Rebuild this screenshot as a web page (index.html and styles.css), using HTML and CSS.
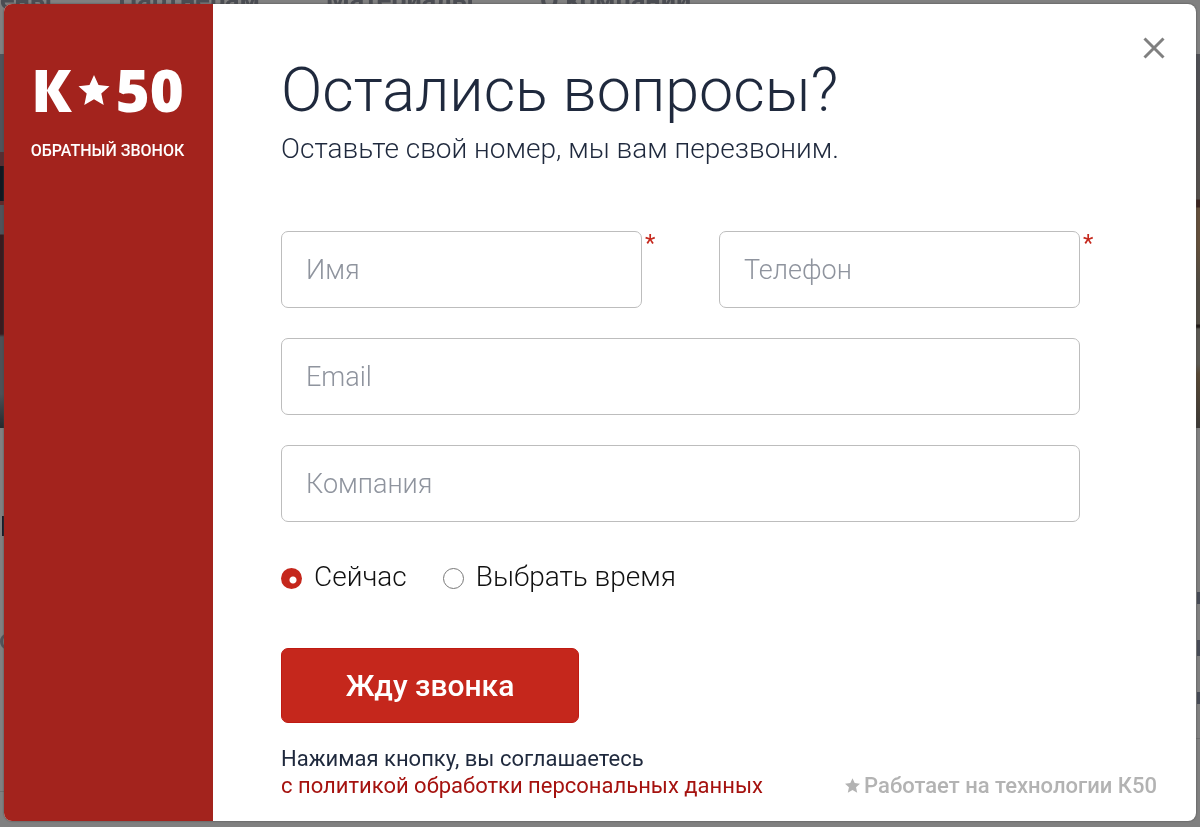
FILE: index.html
```html
<!DOCTYPE html>
<html lang="ru">
<head>
<meta charset="utf-8">
<meta name="viewport" content="width=device-width, initial-scale=1">
<title>Обратный звонок</title>
<link rel="stylesheet" href="styles.css">
</head>
<body>
<div class="page" aria-hidden="true">
  <div class="page-nav"><span>ены</span><span>Партнерам</span><span>Материалы</span><span>О компании</span></div>
  <div class="page-hero"></div>
  <div class="page-edge page-edge-left"><i class="block block-title"></i><i class="block block-letter"></i><i class="rule"></i></div>
  <div class="page-edge page-edge-right"><i class="mark"></i><i class="mark mark-tall"></i><i class="mark"></i><i class="rule"></i></div>
</div>
<main class="dialog" role="dialog" aria-labelledby="title">
  <aside class="side">
    <div class="logo">
      <span>К</span>
      <svg class="logo-star" viewBox="0 0 31 30" aria-hidden="true"><path d="M15.500 0 20 10 31 11.300 22.800 18.600 25.200 30 15.500 24.200 5.800 30 8.200 18.600 0 11.300 11 10Z"/></svg>
      <span>50</span>
    </div>
    <p class="side-label">ОБРАТНЫЙ ЗВОНОК</p>
  </aside>
  <section class="content">
    <button class="close" type="button" aria-label="Закрыть">
      <svg viewBox="0 0 22 22" aria-hidden="true"><path d="M1.500 1.500 20.500 20.500M20.500 1.500 1.500 20.500"/></svg>
    </button>
    <h1 class="title" id="title">Остались вопросы?</h1>
    <p class="lead">Оставьте свой номер, мы вам перезвоним.</p>
    <form class="form">
      <div class="row">
        <div class="field required"><input type="text" placeholder="Имя" aria-label="Имя" required></div>
        <div class="field required"><input type="tel" placeholder="Телефон" aria-label="Телефон" required></div>
      </div>
      <div class="field"><input type="email" placeholder="Email" aria-label="Email"></div>
      <div class="field"><input type="text" placeholder="Компания" aria-label="Компания"></div>
      <div class="options">
        <label class="option"><input type="radio" name="when" checked>Сейчас</label>
        <label class="option"><input type="radio" name="when">Выбрать время</label>
      </div>
      <button class="submit" type="submit">Жду звонка</button>
    </form>
    <footer class="footer">
      <p class="consent">Нажимая кнопку, вы соглашаетесь<br><a href="#">с политикой обработки персональных данных</a></p>
      <a class="powered" href="#"><svg viewBox="0 0 31 30" aria-hidden="true"><path d="M15.500 0 20 10 31 11.300 22.800 18.600 25.200 30 15.500 24.200 5.800 30 8.200 18.600 0 11.300 11 10Z"/></svg>Работает на технологии К50</a>
    </footer>
  </section>
</main>
</body>
</html>
```
FILE: styles.css
```css
* { box-sizing: border-box; }
body {
  margin: 0;
  padding: 4px 4px 6px;
  min-height: 100vh;
  display: flex;
  background: #808080;
  color: #1f293d;
  font-family: Roboto, "Noto Sans", sans-serif;
}
h1, p { margin: 0; }

.page { position: fixed; inset: 0; overflow: hidden; }
.page-nav {
  position: absolute;
  top: -16px;
  left: 0;
  display: flex;
  gap: 66px;
  color: #4b4d53;
  font-size: 27px;
  font-weight: 700;
  line-height: 32px;
  white-space: nowrap;
}
.page-hero {
  position: absolute;
  top: 54px;
  left: 0;
  right: 0;
  height: 374px;
  background:
    linear-gradient(#50535a 0 98px, #582e32 98px 112px, #101820 112px 147px, #602a2c 147px 151px, #50535a 151px 180px, #3a1b1e 181px 280px, #4d5156 283px 340px, #24292d) left / 50% 100% no-repeat,
    linear-gradient(#4e4f55, #55504c 145px, #3b2520 146px 153px, #64503b 154px 190px, #514b42 230px 270px, #201a17 271px 273px, #5b5953 275px 310px, #584834 320px, #3d3936) right / 50% 100% no-repeat;
}
.page-edge { position: absolute; width: 6px; display: flex; flex-direction: column; }
.page-edge-left { left: 0; top: 516px; }
.page-edge-right { right: 0; top: 590px; }
.rule { height: 1px; background: #6f6f6f; }
.block-title { width: 4px; height: 20px; margin-left: 2px; background: #151c27; }
.block-letter { width: 12px; height: 15px; margin: 98px 0 142px; border: 3px solid #51545a; border-radius: 50%; }
.mark { width: 4px; height: 12px; margin: 2px 0 34px 3px; background: #474b56; }
.mark-tall { height: 16px; }

.dialog {
  position: relative;
  flex: 1;
  display: grid;
  grid-template-columns: 209px 1fr;
  background: #fff;
  border-radius: 8px;
  box-shadow: 0 0 2px #444;
  overflow: hidden;
}
.side {
  display: flex;
  flex-direction: column;
  align-items: center;
  padding: 52px 2px 0 0;
  background: #a3231d;
  color: #fff;
}
.logo {
  display: flex;
  align-items: center;
  gap: 6px;
  font: 800 58px/68px "Open Sans", sans-serif;
}
.logo-star { width: 32px; height: 30px; fill: #fff; }
.side-label { margin-top: 16px; font-size: 16px; font-weight: 500; line-height: 22px; }

.content { position: relative; padding: 49px 39px 22px 68px; }
.close {
  position: absolute;
  top: 28px;
  right: 26px;
  width: 32px;
  height: 32px;
  padding: 5px;
  border: 0;
  background: none;
}
.close svg { display: block; width: 22px; height: 22px; fill: none; stroke: #808080; stroke-width: 3; }
.title { font-size: 61px; font-weight: 300; line-height: 74px; }
.lead { margin-top: 4px; font-size: 28px; font-weight: 300; line-height: 36px; }
.form { display: grid; gap: 30px; margin: 64px 77px 0 0; }
.row { display: grid; grid-template-columns: 1fr 1fr; gap: 77px; }
.field { position: relative; }
.required::after {
  content: "*";
  position: absolute;
  top: 0;
  left: calc(100% + 3px);
  color: #c5271c;
  font-size: 24px;
  line-height: 24px;
}
.field input {
  display: block;
  width: 100%;
  height: 77px;
  padding: 0 24px;
  border: 1px solid #bdbdbd;
  border-radius: 7px;
  background: #fff;
  color: #1f293d;
  font: 300 27px/34px Roboto, "Noto Sans", sans-serif;
}
.field input::placeholder { color: #8f949e; opacity: 1; }
.options { display: flex; gap: 36px; padding: 7px 0; }
.option {
  display: flex;
  align-items: center;
  gap: 12px;
  color: #111;
  font-size: 28px;
  font-weight: 300;
  line-height: 36px;
}
.option input {
  appearance: none;
  width: 21px;
  height: 21px;
  margin: 2px 0 0;
  border: 1px solid #777;
  border-radius: 50%;
}
.option input:checked {
  border: 0;
  background: radial-gradient(circle at 12px 12px, #fff 3px, #c5271c 4px);
}
.submit {
  justify-self: start;
  width: 298px;
  height: 75px;
  margin-top: 16px;
  border: 1px solid #bf1a12;
  border-radius: 7px;
  background: #c5271c;
  color: #fff;
  font: 500 30px/36px Roboto, "Noto Sans", sans-serif;
}
.footer {
  display: flex;
  justify-content: space-between;
  align-items: flex-end;
  margin-top: 22px;
  font-size: 22px;
  line-height: 27px;
}
.consent a { color: #a5120f; text-decoration: none; }
.powered { display: flex; align-items: center; gap: 4px; color: #b3b3b3; font-weight: 500; text-decoration: none; }
.powered svg { width: 15px; height: 15px; fill: #b3b3b3; }
```
